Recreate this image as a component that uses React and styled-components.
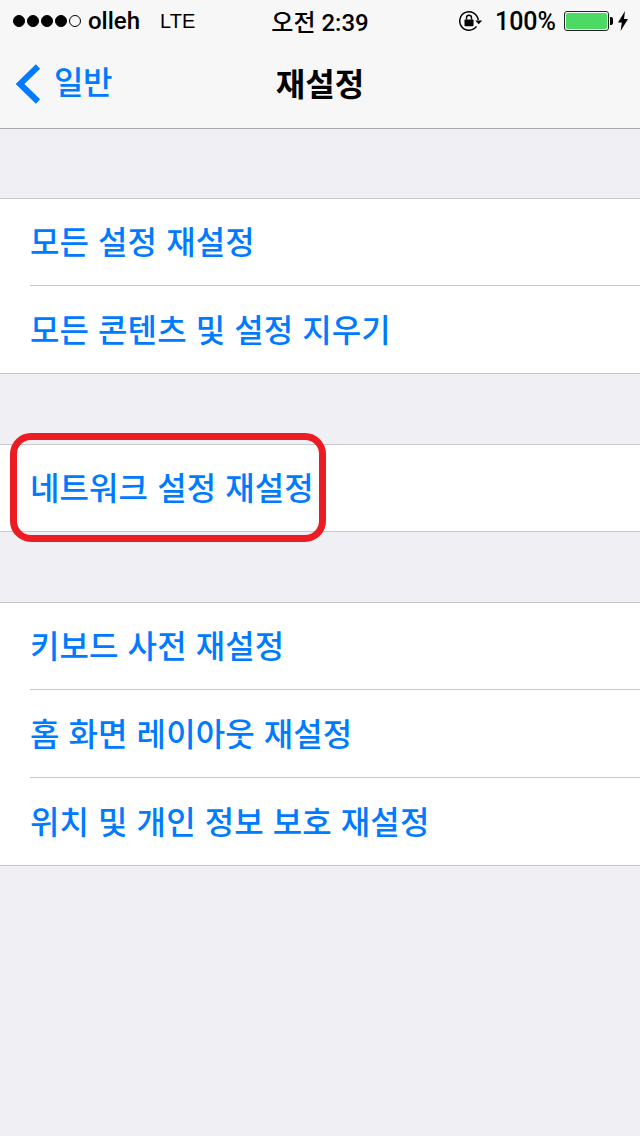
import React from 'react'
import styled, { createGlobalStyle } from 'styled-components'

const GlobalStyle = createGlobalStyle`
  html, body {
    margin: 0;
    padding: 0;
    background: #efeff4;
  }
`

const groups = [
  ['모든 설정 재설정', '모든 콘텐츠 및 설정 지우기'],
  ['네트워크 설정 재설정'],
  ['키보드 사전 재설정', '홈 화면 레이아웃 재설정', '위치 및 개인 정보 보호 재설정'],
]

function LockIcon() {
  return (
    <svg width="24" height="24" viewBox="0 0 24 24">
      <path d="M17.5 17.4A9.25 9.25 0 1 1 19.2 11" fill="none" stroke="#000" strokeWidth="1.5" />
      <path d="M16.2 11.4h7l-3.5 3.8z" fill="#000" />
      <rect x="5.5" y="10.5" width="9" height="6.8" rx="0.8" fill="#000" />
      <path d="M7.5 10.5V8.7a2.5 2.5 0 0 1 5 0v1.8" fill="none" stroke="#000" strokeWidth="1.4" />
    </svg>
  )
}

function Battery() {
  return (
    <BatteryWrap>
      <BatteryBody>
        <BatteryFill />
      </BatteryBody>
      <BatteryTip />
    </BatteryWrap>
  )
}

export default function App() {
  return (
    <Page>
      <GlobalStyle />
      <Header>
        <StatusBar>
          <StatusLeft>
            <Dots>
              {[1, 1, 1, 1, 0].map((on, i) => <Dot key={i} $on={on} />)}
            </Dots>
            <Carrier>olleh</Carrier>
            <Network>LTE</Network>
          </StatusLeft>
          <Clock>오전 2:39</Clock>
          <StatusRight>
            <LockIcon />
            <Percent>100%</Percent>
            <Battery />
            <svg width="10" height="20" viewBox="0 0 10 20">
              <path d="M7 0 0 11.5h3.8L2.6 20 10 8H6z" fill="#000" />
            </svg>
          </StatusRight>
        </StatusBar>
        <NavBar>
          <Back>
            <svg width="28" height="42" viewBox="0 0 28 42">
              <path d="M24 3.5 6 21l18 17.5" fill="none" stroke="#007aff" strokeWidth="6" />
            </svg>
            <BackLabel>일반</BackLabel>
          </Back>
          <Title>재설정</Title>
        </NavBar>
      </Header>
      {groups.map((rows, i) => (
        <Group key={i}>
          {rows.map((row, j) => (
            <Row key={row} $first={j === 0}>
              <RowLabel>{row}</RowLabel>
            </Row>
          ))}
          {i === 1 && <Highlight />}
        </Group>
      ))}
    </Page>
  )
}

const Page = styled.div`
  width: 640px;
  height: 1136px;
  overflow: hidden;
  background: #efeff4;
  font-family: "Liberation Sans", "Noto Sans CJK KR", sans-serif;
`
const Header = styled.div`
  height: 128px;
  margin-bottom: -1px;
  background: #f7f7f8;
  border-bottom: 1px solid #a9a9ad;
`
const StatusBar = styled.div`
  height: 40px;
  display: grid;
  grid-template-columns: 1fr auto 1fr;
  align-items: center;
  padding: 2px 12px 0;
  box-sizing: border-box;
  color: #000;
  font-family: Roboto, "Noto Sans CJK KR", sans-serif;
`
const StatusLeft = styled.div`
  display: flex;
  align-items: center;
  padding-left: 1px;
`
const Dots = styled.div`
  display: flex;
  gap: 2px;
  margin-right: 7px;
`
const Dot = styled.span`
  width: 12px;
  height: 12px;
  border-radius: 50%;
  box-sizing: border-box;
  border: 1px solid #000;
  background: ${props => (props.$on ? '#000' : 'transparent')};
`
const Carrier = styled.span`
  font-size: 24px;
  font-weight: 500;
`
const Network = styled.span`
  font-family: "Liberation Sans", sans-serif;
  font-size: 20px;
  margin-left: 20px;
`
const Clock = styled.span`
  font-size: 24px;
  font-weight: 500;
  white-space: nowrap;
  margin-top: -2px;
`
const StatusRight = styled.div`
  display: flex;
  align-items: center;
  justify-content: flex-end;
`
const Percent = styled.span`
  font-size: 25px;
  font-weight: 500;
  margin-left: 12px;
  margin-right: 8px;
`
const BatteryWrap = styled.div`
  display: flex;
  align-items: center;
  margin-right: 5px;
`
const BatteryBody = styled.div`
  width: 45px;
  height: 20px;
  box-sizing: border-box;
  border: 1px solid #222;
  border-radius: 3px;
  padding: 1px;
`
const BatteryFill = styled.div`
  height: 100%;
  background: #4cd964;
  border-radius: 2px;
`
const BatteryTip = styled.div`
  width: 3px;
  height: 8px;
  margin-left: 1px;
  background: #000;
  border-radius: 0 2px 2px 0;
`
const NavBar = styled.div`
  height: 88px;
  position: relative;
  display: flex;
  align-items: center;
  justify-content: center;
`
const Back = styled.div`
  position: absolute;
  left: 14px;
  top: 23px;
  display: flex;
  align-items: center;
  gap: 12px;
`
const BackLabel = styled.span`
  font-size: 32px;
  font-weight: 500;
  color: #007aff;
  line-height: 42px;
  letter-spacing: -0.5px;
  margin-top: -2px;
`
const Title = styled.div`
  font-size: 32px;
  font-weight: 700;
  color: #000;
  margin-top: -4px;
`
const Group = styled.div`
  position: relative;
  margin-top: 70px;
  background: #fff;
  border-top: 1px solid #c8c7cc;
  border-bottom: 1px solid #c8c7cc;
`
const Row = styled.div`
  height: ${props => (props.$first ? '86px' : '87px')};
  margin-left: 30px;
  display: flex;
  align-items: center;
  border-top: ${props => (props.$first ? 'none' : '1px solid #c8c7cc')};
`
const RowLabel = styled.span`
  font-size: 32px;
  font-weight: 500;
  color: #007aff;
  line-height: 40px;
  letter-spacing: 0.1px;
  margin-top: 2px;
`
const Highlight = styled.div`
  position: absolute;
  left: 10px;
  top: -12px;
  width: 316px;
  height: 109px;
  box-sizing: border-box;
  border: 7px solid #ed1c24;
  border-radius: 21px;
  pointer-events: none;
`
